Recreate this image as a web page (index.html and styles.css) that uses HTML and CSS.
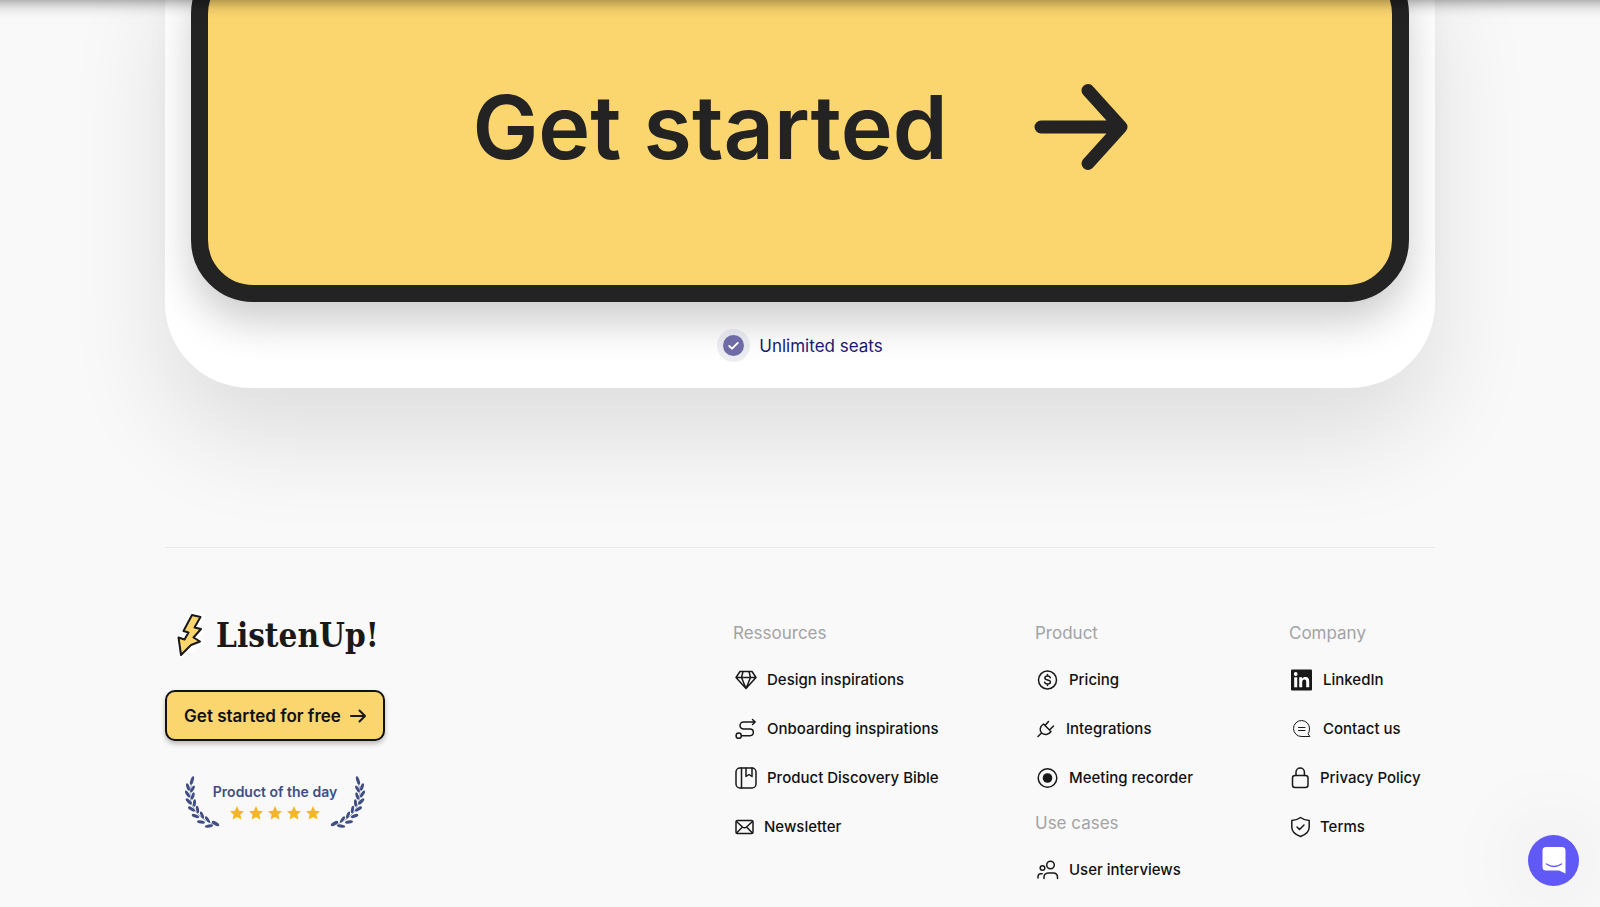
FILE: index.html
```html
<!DOCTYPE html>
<html lang="en">

<head>
    <meta charset="UTF-8">
    <meta name="viewport" content="width=device-width, initial-scale=1.0">
    <title>ListenUp!</title>
    <link rel="stylesheet" href="styles.css">
</head>

<body>
    <header class="topbar"></header>

    <main class="container">
        <section class="card">
            <a class="cta" href="#">
                <span>Get started</span>
                <svg class="cta-arrow" viewBox="0 0 94 88" fill="none" stroke="#232323" stroke-width="13" stroke-linecap="round" stroke-linejoin="round">
                    <path d="M7 44H87M54 7.500L87 44L54 80.500" />
                </svg>
            </a>
            <p class="perk">
                <span class="perk-icon">
                    <svg viewBox="0 0 22 22">
                        <circle cx="11" cy="11" r="11" fill="#6e6ba6" />
                        <path d="M6.500 11.500L9.500 14.300L15.500 8.300" fill="none" stroke="#fff" stroke-width="2" stroke-linecap="round" stroke-linejoin="round" />
                    </svg>
                </span>
                Unlimited seats
            </p>
        </section>
    </main>

    <footer class="container footer">
        <div class="brand">
            <a class="logo" href="#">
                <svg class="bolt" viewBox="0 0 30 46">
                    <path d="M17 3L26 5L20 17L26 19L19 27L26 30L6 43L3 26L9 28L14 20L9 19Z" fill="#fff" stroke="#fff" stroke-width="6" stroke-linejoin="round" />
                    <path d="M16 3L24.500 5L18.500 15.500L25 17L17.500 25.500L24 29.500L15 33L5 43L2.500 25.500L8.500 27.500L12.500 20.500L7.500 19Z" fill="#fbd56e" stroke="#191919" stroke-width="2" stroke-linejoin="round" />
                </svg>
                <span>ListenUp!</span>
            </a>
            <a class="btn" href="#">
                <span>Get started for free</span>
                <svg class="btn-arrow" viewBox="0 0 16 14" fill="none" stroke="#191919" stroke-width="2" stroke-linecap="round" stroke-linejoin="round">
                    <path d="M1 7H15M9.500 1.500L15 7L9.500 12.500" />
                </svg>
            </a>
            <div class="award">
                <svg class="laurel" viewBox="0 0 35 54">
                    <g id="laurel" fill="#414e84">
                        <path d="M7 8C2 22 6 42 31 50" fill="none" stroke="#414e84" stroke-width="0.500" />
                        <ellipse cx="7" cy="5.500" rx="1.600" ry="4.500" transform="rotate(18 7 5.500)" />
                        <ellipse cx="3" cy="12" rx="1.600" ry="4" transform="rotate(-18 3 12)" />
                        <ellipse cx="7.500" cy="14" rx="1.500" ry="3.800" transform="rotate(30 7.500 14)" />
                        <ellipse cx="2.500" cy="19" rx="1.600" ry="4" transform="rotate(-32 2.500 19)" />
                        <ellipse cx="7.800" cy="21" rx="1.500" ry="3.800" transform="rotate(18 7.800 21)" />
                        <ellipse cx="3.800" cy="26.500" rx="1.600" ry="4" transform="rotate(-45 3.800 26.500)" />
                        <ellipse cx="9.500" cy="28" rx="1.500" ry="3.800" transform="rotate(4 9.500 28)" />
                        <ellipse cx="6.500" cy="34" rx="1.600" ry="4" transform="rotate(-58 6.500 34)" />
                        <ellipse cx="12.500" cy="34.500" rx="1.500" ry="3.800" transform="rotate(-10 12.500 34.500)" />
                        <ellipse cx="10.500" cy="41" rx="1.600" ry="4" transform="rotate(-70 10.500 41)" />
                        <ellipse cx="17" cy="40" rx="1.500" ry="3.800" transform="rotate(-22 17 40)" />
                        <ellipse cx="16" cy="47" rx="1.600" ry="4" transform="rotate(-82 16 47)" />
                        <ellipse cx="22.500" cy="44.500" rx="1.500" ry="3.800" transform="rotate(-35 22.500 44.500)" />
                        <ellipse cx="24" cy="51" rx="1.600" ry="4.200" transform="rotate(-100 24 51)" />
                        <ellipse cx="30.500" cy="48.500" rx="1.800" ry="4.200" transform="rotate(-60 30.500 48.500)" />
                    </g>
                </svg>
                <div class="award-body">
                    <p class="award-title">Product of the day</p>
                    <svg class="stars" viewBox="0 0 91 14" fill="#f3b81f">
                        <path id="star" d="M7 0L9.100 4.700L14 5.200L10.400 8.600L11.400 13.600L7 11.100L2.600 13.600L3.600 8.600L0 5.200L4.900 4.700Z" />
                        <use href="#star" x="19" />
                        <use href="#star" x="38" />
                        <use href="#star" x="57" />
                        <use href="#star" x="76" />
                    </svg>
                </div>
                <svg class="laurel" viewBox="0 0 35 54">
                    <use href="#laurel" transform="translate(35 0) scale(-1 1)" />
                </svg>
            </div>
        </div>

        <nav class="column">
            <h2>Ressources</h2>
            <ul>
                <li><a href="#">
                    <svg class="icon" viewBox="0 0 24 24"><path d="M7 3.500H19L23 9.500L13 20.500L3 9.500ZM3 9.500H23M10 3.500L8.500 9.500L13 20.500L17.500 9.500L16 3.500" /></svg>
                    Design inspirations
                </a></li>
                <li><a href="#">
                    <svg class="icon" viewBox="0 0 24 24"><path d="M22 5H10.500a3.500 3.500 0 0 0 0 7H17a3.300 3.300 0 0 1 0 6.700H8.500M19.500 2.500L22.200 5L19.500 7.500" /><circle cx="5.700" cy="18.700" r="2.600" /></svg>
                    Onboarding inspirations
                </a></li>
                <li><a href="#">
                    <svg class="icon" viewBox="0 0 24 24"><rect x="3" y="2" width="20" height="20" rx="4" /><path d="M8.500 2V22M13 2V10.500L16 8.500L19 10.500V2" /></svg>
                    Product Discovery Bible
                </a></li>
                <li><a href="#">
                    <svg class="icon icon-sm" viewBox="0 0 21 24"><rect x="3" y="5.500" width="17" height="13" rx="1.500" /><path d="M3.500 6.500L9.500 12Q11.500 13.500 13.500 12L19.500 6.500M3.500 18L9 12.500M19.500 18L14 12.500" /></svg>
                    Newsletter
                </a></li>
            </ul>
        </nav>

        <nav class="column">
            <h2>Product</h2>
            <ul>
                <li><a href="#">
                    <svg class="icon" viewBox="0 0 24 24"><circle cx="12.500" cy="12" r="9" /><path d="M15.300 9.700C15 8.500 14 8 12.500 8C10.900 8 9.900 8.800 9.900 9.900C9.900 12.600 15.400 11.300 15.400 14C15.400 15.200 14.200 16 12.600 16C11 16 10 15.400 9.600 14.200M12.500 6.600V8M12.500 16V17.400" /></svg>
                    Pricing
                </a></li>
                <li><a href="#">
                    <svg class="icon icon-sm" viewBox="0 0 21 24"><path d="M3 19.500L6.500 16M8.500 7L16 14.500C13.500 18 9.500 18.500 6.800 16C4 13 5 9.500 8.500 7ZM10 8.500L13.500 4.500M14.500 13L18.500 9" /></svg>
                    Integrations
                </a></li>
                <li><a href="#">
                    <svg class="icon" viewBox="0 0 24 24"><circle cx="12.500" cy="12" r="9.300" /><circle class="solid" cx="12.500" cy="12" r="4.800" /></svg>
                    Meeting recorder
                </a></li>
            </ul>
            <h2>Use cases</h2>
            <ul>
                <li><a href="#">
                    <svg class="icon" viewBox="0 0 24 24"><circle cx="15.500" cy="7" r="3.800" /><circle cx="7.500" cy="10" r="2.300" /><path d="M9 20.500V19.500a4 4 0 0 1 4-4.500h5a4 4 0 0 1 4.500 4.500V20.500M3 20V18.500a2.700 2.700 0 0 1 2.700-2.800h1.500" /></svg>
                    User interviews
                </a></li>
            </ul>
        </nav>

        <nav class="column">
            <h2>Company</h2>
            <ul>
                <li><a href="#">
                    <svg class="icon" viewBox="0 0 24 24"><rect class="solid" x="2" y="1.500" width="21" height="21" rx="1" /><g class="cut"><circle cx="6.700" cy="6" r="1.900" /><rect x="5.200" y="9.300" width="3" height="10" /><path d="M10.200 9.300H13.100V10.700C13.800 9.600 14.900 9 16.300 9C19.300 9 20.200 10.900 20.200 13.600V19.300H17.200V14.200C17.200 12.900 17 11.600 15.500 11.600C13.800 11.600 13.200 12.900 13.200 14.200V19.300H10.200Z" /></g></svg>
                    LinkedIn
                </a></li>
                <li><a href="#">
                    <svg class="icon icon-thin" viewBox="0 0 24 24"><path d="M20.500 19.500H13A8 8 0 1 1 20.500 12C20.500 14 20 15.500 19.300 16.500ZM9.500 10.500H16M9.500 13.500H16" /></svg>
                    Contact us
                </a></li>
                <li><a href="#">
                    <svg class="icon icon-sm" viewBox="0 0 21 24"><rect x="3.500" y="9.500" width="15.500" height="12" rx="2.500" /><path d="M7 9.500V6.300a4.200 4.200 0 0 1 8.400 0V9.500" /></svg>
                    Privacy Policy
                </a></li>
                <li><a href="#">
                    <svg class="icon icon-sm" viewBox="0 0 21 24"><path d="M11.500 2.500Q15.500 5.500 20.200 5.500V12Q20.200 18.500 11.500 21.500Q2.800 18.500 2.800 12V5.500Q7.500 5.500 11.500 2.500ZM8 12L10.500 14.500L15 10" /></svg>
                    Terms
                </a></li>
            </ul>
        </nav>
    </footer>

    <button class="chat" type="button" aria-label="Open chat">
        <svg viewBox="0 0 24 27">
            <path d="M4 0H20Q23.500 0 23.500 3.500V26.500L17 23.500H4Q0.500 23.500 0.500 20V3.500Q0.500 0 4 0Z" fill="#fff" />
            <path d="M4.500 17Q12 22 19.500 17" fill="none" stroke="#6059f6" stroke-width="1.500" stroke-linecap="round" />
        </svg>
    </button>
</body>

</html>
```
FILE: styles.css
```css
* {
    margin: 0;
    padding: 0;
    box-sizing: border-box;
}

body {
    background-color: #f9f9f9;
    font-family: "Inter", "Liberation Sans", sans-serif;
    color: #111;
    overflow: hidden;
}

a {
    color: inherit;
    text-decoration: none;
}

ul {
    list-style: none;
}

svg {
    display: block;
    flex-shrink: 0;
}

/* bar above the viewport, only its shadow shows */
.topbar {
    position: fixed;
    top: -80px;
    left: -20px;
    right: -20px;
    height: 80px;
    box-shadow: 0 0 16px rgba(0, 0, 0, 0.55);
    z-index: 10;
}

.container {
    width: calc(100% - 330px);
    max-width: 1270px;
    margin: 0 auto;
}

/* card */
.card {
    margin-top: -74px;
    padding: 26px;
    background-color: #fff;
    border-radius: 85px;
    box-shadow: 0 50px 100px rgba(0, 0, 0, 0.11);
}

.cta {
    display: flex;
    align-items: center;
    justify-content: center;
    gap: 86px;
    height: 350px;
    background-color: #fbd56e;
    border: 17px solid #232323;
    border-radius: 62px;
    box-shadow: 0 20px 40px rgba(0, 0, 0, 0.2);
    color: #232323;
    font-size: 88px;
    font-weight: 600;
}

.cta-arrow {
    width: 94px;
    height: 88px;
}

.perk {
    display: flex;
    align-items: center;
    justify-content: center;
    gap: 9px;
    margin-top: 27px;
    color: #1c1871;
    font-size: 17px;
}

.perk-icon {
    padding: 6px;
    border-radius: 50%;
    background-color: rgba(110, 107, 166, 0.12);
}

.perk-icon svg {
    width: 21px;
    height: 21px;
}

/* footer */
.footer {
    display: grid;
    grid-template-columns: 1fr 206px 158px 146px;
    column-gap: 96px;
    margin-top: 159px;
    padding-top: 64px;
    border-top: 1px solid #e9e9e9;
}

.brand {
    display: flex;
    flex-direction: column;
    align-items: flex-start;
}

.logo {
    display: flex;
    align-items: center;
    gap: 10px;
    height: 46px;
    padding-left: 11px;
    color: #191919;
    font-family: "DejaVu Serif Condensed", "DejaVu Serif", serif;
    font-size: 33px;
    font-weight: 700;
}

.bolt {
    width: 30px;
    height: 46px;
    overflow: visible;
}

.btn {
    display: flex;
    align-items: center;
    justify-content: center;
    gap: 9px;
    width: 220px;
    height: 51px;
    margin-top: 32px;
    background-color: #fbd56e;
    border: 2px solid #111;
    border-radius: 10px;
    box-shadow: 0 3px 5px rgba(0, 0, 0, 0.25);
    font-size: 17px;
    font-weight: 600;
}

.btn-arrow {
    width: 16px;
    height: 14px;
}

.award {
    display: flex;
    width: 220px;
    margin-top: 34px;
    justify-content: center;
}

.laurel {
    width: 35px;
    height: 54px;
}

.award-body {
    display: flex;
    flex-direction: column;
    align-items: center;
    width: 110px;
    padding-top: 8px;
}

.award-title {
    color: #414e84;
    font-size: 14px;
    font-weight: 600;
    line-height: 18px;
    white-space: nowrap;
}

.stars {
    width: 91px;
    height: 14px;
    margin-top: 5px;
}

.column h2 {
    color: #a3a3a3;
    font-size: 17px;
    font-weight: 400;
    line-height: 43px;
}

.column a {
    display: flex;
    align-items: center;
    gap: 10px;
    height: 49px;
    font-size: 15px;
    font-weight: 500;
    white-space: nowrap;
}

.icon {
    width: 24px;
    height: 24px;
    fill: none;
    stroke: #191919;
    stroke-width: 1.5;
    stroke-linecap: round;
    stroke-linejoin: round;
}

.icon-sm {
    width: 21px;
}

.icon-thin {
    stroke-width: 1;
}

.solid {
    fill: #191919;
    stroke: none;
}

.cut {
    fill: #fff;
    stroke: none;
}

/* chat launcher */
.chat {
    position: fixed;
    right: 21px;
    bottom: 21px;
    display: flex;
    align-items: center;
    justify-content: center;
    width: 51px;
    height: 51px;
    border: none;
    border-radius: 50%;
    background-color: #6059f6;
    box-shadow: 0 0 90px rgba(0, 0, 0, 0.15);
    cursor: pointer;
}

.chat svg {
    width: 24px;
    height: 27px;
}
```
